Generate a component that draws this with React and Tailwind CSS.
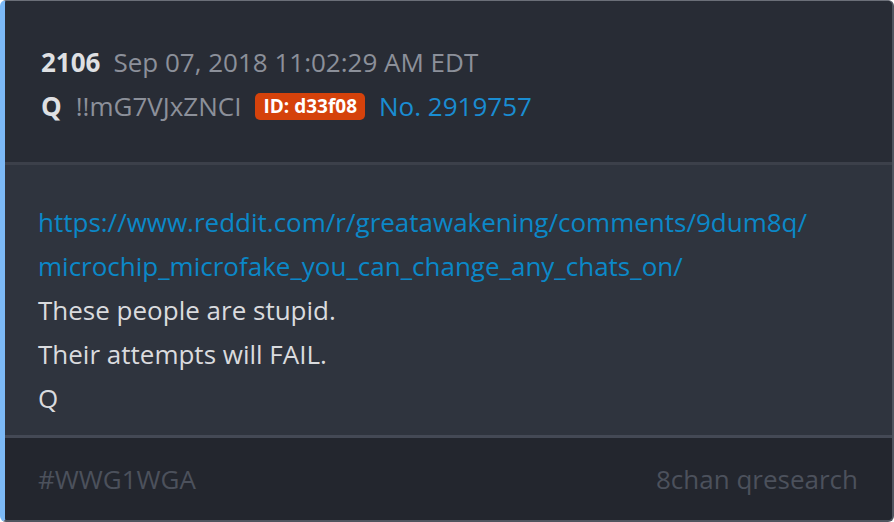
import React from 'react';

const font = { fontFamily: '"Open Sans", "Noto Sans", sans-serif' };

export default function App() {
  return (
    <div className="w-[894px] h-[522px] bg-white" style={font}>
      <div className="w-[894px] h-[522px] flex flex-col rounded-md overflow-hidden border-l-[5px] border-l-[#7cb9f6] border-t border-r-2 border-b-2 border-t-[#6b6f78] border-r-[#50555f] border-b-[#50555f] bg-[#282c35]">
        {/* Header */}
        <div className="h-[161px] bg-[#282c35] pl-[36px] pt-[40px] text-[26px]">
          <div className="flex items-center h-[43px]">
            <span className="font-bold text-[#dfe0e3]">2106</span>
            <span className="ml-[13px] text-[#8c909a]">Sep 07, 2018 11:02:29 AM EDT</span>
          </div>
          <div className="flex items-center h-[44px]">
            <span className="font-bold text-[#dfe0e3]">Q</span>
            <span className="ml-[14px] text-[#8c909a]">!!mG7VJxZNCI</span>
            <span className="ml-[14px] h-[27px] px-[8px] flex items-center rounded-[5px] bg-[#d5420b] text-white font-bold text-[19px]">ID: d33f08</span>
            <span className="ml-[14px] text-[#1a8dd2]">No. 2919757</span>
          </div>
        </div>
        <div className="h-[3px] bg-[#3c404a]" />
        {/* Body */}
        <div className="h-[270px] bg-[#2f343e] pl-[33px] pt-[35px] text-[26px] leading-[44px] text-[#dadbde]">
          <div className="text-[#0b88c8]">https://www.reddit.com/r/greatawakening/comments/9dum8q/</div>
          <div className="text-[#0b88c8]">microchip_microfake_you_can_change_any_chats_on/</div>
          <div>These people are stupid.</div>
          <div>Their attempts will FAIL.</div>
          <div>Q</div>
        </div>
        <div className="h-[3px] bg-[#444955]" />
        {/* Footer */}
        <div className="flex-1 bg-[#23262e] pl-[33px] pr-[34px] flex items-center justify-between text-[26px] text-[#4c515c]">
          <span>#WWG1WGA</span>
          <span>8chan qresearch</span>
        </div>
      </div>
    </div>
  );
}
